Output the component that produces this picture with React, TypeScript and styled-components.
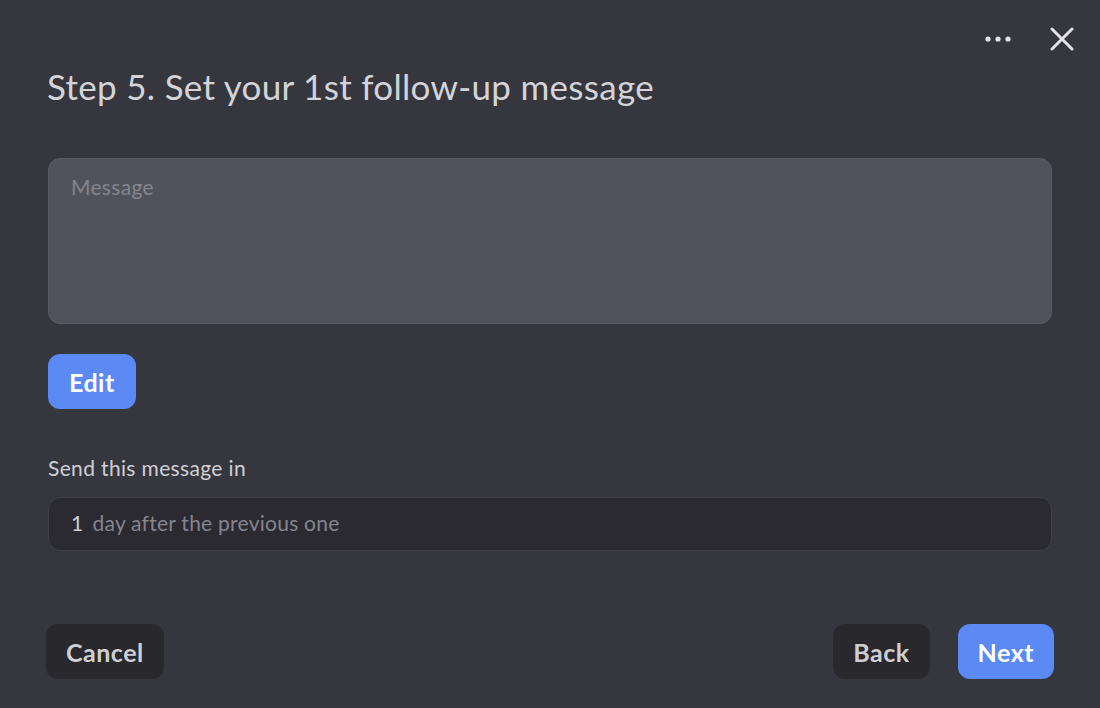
import React from "react";
import styled, { createGlobalStyle } from "styled-components";

const Global = createGlobalStyle`
  html, body { margin: 0; padding: 0; background: #36363f; }
  body { font-family: Lato, "Open Sans", sans-serif; }
  * { box-sizing: border-box; }
`;

const Page = styled.div`
  width: 1100px;
  height: 708px;
  background: #36363f;
  display: flex;
  flex-direction: column;
  padding: 24px 46px 29px 48px;
`;

const TopBar = styled.div`
  display: flex;
  justify-content: flex-end;
  align-items: center;
  gap: 38px;
  height: 30px;
  margin-right: -20px;
`;

const IconButton = styled.button`
  background: none;
  border: none;
  padding: 0;
  display: flex;
  align-items: center;
  justify-content: center;
  cursor: pointer;
`;

const Title = styled.h1`
  margin: 12px 0 0 -1px;
  font-size: 35px;
  font-weight: 400;
  color: #d4d4d8;
  letter-spacing: 0.3px;
  line-height: 40px;
`;

const MessageBox = styled.div`
  margin-top: 52px;
  margin-right: 2px;
  height: 166px;
  background: #52525c;
  border: 1px solid #5a5a64;
  border-radius: 12px;
  padding: 15px 22px;
  font-size: 21px;
  line-height: 26px;
  letter-spacing: 0.3px;
  color: #85858e;
`;

const Button = styled.button<{ $primary?: boolean; $wide?: boolean }>`
  height: 55px;
  border: none;
  border-radius: 12px;
  padding: 0 ${(p) => (p.$wide ? "21px" : "20px")};
  font-family: Lato, "Open Sans", sans-serif;
  font-weight: 700;
  font-size: 25px;
  letter-spacing: 0.5px;
  background: ${(p) => (p.$primary ? "#5b8af5" : "#28282d")};
  color: ${(p) => (p.$primary ? "#ffffff" : "#cfcfd3")};
  cursor: pointer;
`;

const EditRow = styled.div`
  margin-top: 30px;
  display: flex;
`;

const Label = styled.div`
  margin-top: 46px;
  font-size: 21px;
  line-height: 26px;
  letter-spacing: 0.35px;
  color: #d0d0d4;
`;

const DelayField = styled.div`
  margin-top: 16px;
  margin-right: 2px;
  height: 54px;
  background: #2a2a30;
  border: 1px solid #404048;
  border-radius: 12px;
  display: flex;
  align-items: center;
  gap: 9px;
  padding: 0 22px 4px;
  font-size: 21px;
  letter-spacing: 0.25px;
`;

const Num = styled.span`
  color: #d0d0d4;
`;

const Hint = styled.span`
  color: #85858e;
`;

const Footer = styled.div`
  margin-top: auto;
  display: flex;
  align-items: center;
  justify-content: space-between;
  margin-left: -2px;
`;

const Group = styled.div`
  display: flex;
  gap: 28px;
`;

export default function App() {
  return (
    <>
      <Global />
      <Page>
        <TopBar>
          <IconButton aria-label="More">
            <svg width="28" height="8" viewBox="0 0 28 8">
              <circle cx="4" cy="4" r="2.6" fill="#e4e4e8" />
              <circle cx="14" cy="4" r="2.6" fill="#e4e4e8" />
              <circle cx="24" cy="4" r="2.6" fill="#e4e4e8" />
            </svg>
          </IconButton>
          <IconButton aria-label="Close">
            <svg width="24" height="24" viewBox="0 0 24 24">
              <path d="M2 2 L22 22 M22 2 L2 22" stroke="#e4e4e8" strokeWidth="3" strokeLinecap="round" />
            </svg>
          </IconButton>
        </TopBar>
        <Title>Step 5. Set your 1st follow-up message</Title>
        <MessageBox>Message</MessageBox>
        <EditRow>
          <Button $primary $wide>Edit</Button>
        </EditRow>
        <Label>Send this message in</Label>
        <DelayField>
          <Num>1</Num>
          <Hint>day after the previous one</Hint>
        </DelayField>
        <Footer>
          <Button>Cancel</Button>
          <Group>
            <Button>Back</Button>
            <Button $primary>Next</Button>
          </Group>
        </Footer>
      </Page>
    </>
  );
}
